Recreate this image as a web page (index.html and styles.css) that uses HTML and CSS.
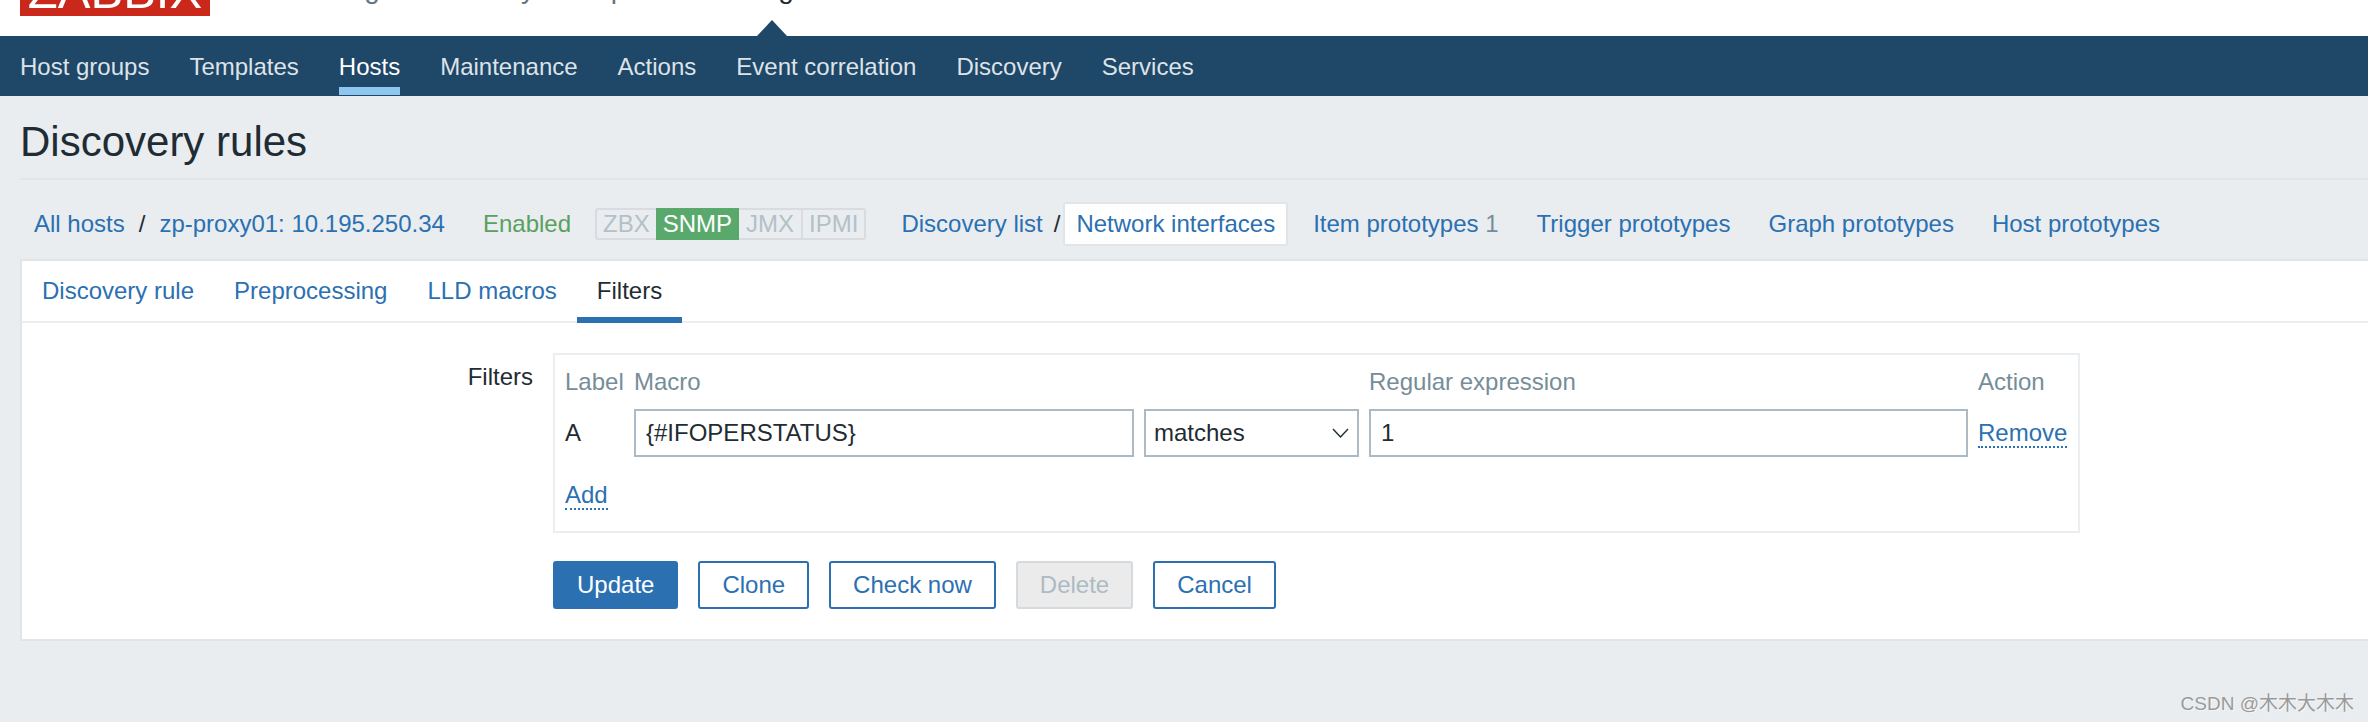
FILE: index.html
```html
<!DOCTYPE html>
<html lang="zh">
<head>
<meta charset="UTF-8" />
<title>Discovery rules</title>
<link rel="stylesheet" href="styles.css">
</head>
<body>
  <header class="top-bar">
    <div class="logo"><span>ZABBIX</span></div>
    <ul class="top-menu">
      <li>Monitoring</li>
      <li>Inventory</li>
      <li>Reports</li>
      <li class="current">Configuration</li>
      <li>Administration</li>
    </ul>
    <div class="caret"></div>
  </header>

  <nav class="sub-menu">
    <a href="#">Host groups</a>
    <a href="#">Templates</a>
    <a href="#" class="selected">Hosts</a>
    <a href="#">Maintenance</a>
    <a href="#">Actions</a>
    <a href="#">Event correlation</a>
    <a href="#">Discovery</a>
    <a href="#">Services</a>
  </nav>

  <div class="title-bar">
    <h1>Discovery rules</h1>
  </div>

  <div class="crumbs">
    <a href="#">All hosts</a>
    <span class="sep">/</span>
    <a href="#">zp-proxy01: 10.195.250.34</a>
    <span class="status-enabled">Enabled</span>
    <div class="avail">
      <span>ZBX</span>
      <span class="on">SNMP</span>
      <span>JMX</span>
      <span>IPMI</span>
    </div>
    <a href="#" class="list-link">Discovery list</a>
    <span class="sep sep-tight">/</span>
    <a href="#" class="crumb-tab active">Network interfaces</a>
    <a href="#" class="crumb-tab">Item prototypes <sup>1</sup></a>
    <a href="#" class="crumb-tab">Trigger prototypes</a>
    <a href="#" class="crumb-tab">Graph prototypes</a>
    <a href="#" class="crumb-tab">Host prototypes</a>
  </div>

  <main class="card">
    <div class="tabs">
      <a href="#">Discovery rule</a>
      <a href="#">Preprocessing</a>
      <a href="#">LLD macros</a>
      <a href="#" class="selected">Filters</a>
    </div>

    <div class="form">
      <div class="form-label">Filters</div>
      <div class="form-body">
        <div class="filter-box">
          <div class="filter-grid">
            <div class="head">Label</div>
            <div class="head">Macro</div>
            <div class="head head-gap"></div>
            <div class="head">Regular expression</div>
            <div class="head">Action</div>

            <div>A</div>
            <input type="text" value="{#IFOPERSTATUS}">
            <div class="select">
              <span>matches</span>
              <svg width="17" height="10" viewBox="0 0 17 10"><path d="M1 1l7.5 8L16 1" fill="none" stroke="#1f2c33" stroke-width="1.4"/></svg>
            </div>
            <input type="text" value="1">
            <div><a href="#" class="dotted">Remove</a></div>
          </div>
          <a href="#" class="dotted add-link">Add</a>
        </div>

        <div class="buttons">
          <button class="primary">Update</button>
          <button>Clone</button>
          <button>Check now</button>
          <button class="disabled">Delete</button>
          <button>Cancel</button>
        </div>
      </div>
    </div>
  </main>

  <div class="watermark">CSDN @木木大木木</div>
</body>
</html>
```

FILE: styles.css
```css
* {
  box-sizing: border-box;
}
html, body {
  margin: 0;
  height: 722px;
  overflow: hidden;
}
body {
  position: relative;
  background-color: #e9edf0;
  color: #1f2c33;
  font-family: "Liberation Sans", Arial, sans-serif;
  font-size: 24px;
  line-height: 28px;
}
a {
  color: #2b70b1;
  text-decoration: none;
}

/* top bar, cut off by the top of the picture */
.top-bar {
  position: relative;
  display: flex;
  align-items: flex-end;
  height: 36px;
  background-color: #fff;
  overflow: hidden;
}
.logo {
  display: flex;
  align-items: flex-end;
  justify-content: center;
  width: 190px;
  height: 16px;
  margin: 0 0 20px 20px;
  padding-bottom: 7px;
  background-color: #c9281b;
  color: #fff;
  font-size: 49px;
  line-height: 36px;
}
.logo span {
  display: block;
  height: 36px;
  flex-shrink: 0;
}
.top-menu {
  display: flex;
  gap: 40px;
  margin: 0 0 31px 39px;
  padding: 0;
  list-style: none;
  color: #66767f;
  font-size: 28px;
  line-height: 32px;
}
.top-menu .current {
  color: #1f2c33;
}
.caret {
  position: absolute;
  left: 757px;
  top: 20px;
  width: 30px;
  height: 16px;
  background-color: #1f4767;
  clip-path: polygon(50% 0, 100% 100%, 0 100%);
}

.sub-menu {
  display: flex;
  gap: 40px;
  height: 60px;
  padding: 0 20px;
  background-color: #1f4767;
}
.sub-menu a {
  height: 59px;
  padding: 17px 0 6px;
  border-bottom: 8px solid transparent;
  color: #dde3e8;
}
.sub-menu a.selected {
  color: #fff;
  border-bottom-color: #8fc6ef;
}

.title-bar {
  height: 84px;
  margin-left: 20px;
  padding-top: 22px;
  border-bottom: 2px solid #e2e5e8;
}
h1 {
  margin: 0;
  font-size: 42px;
  font-weight: normal;
  line-height: 48px;
}

.crumbs {
  display: flex;
  align-items: center;
  height: 79px;
  padding: 9px 0 0 34px;
}
.sep {
  margin: 0 14px;
}
.sep-tight {
  margin: 0 0 0 11px;
}
.status-enabled {
  margin-left: 38px;
  color: #5aa05e;
}
.avail {
  display: flex;
  height: 32px;
  margin-left: 24px;
  border: 2px solid #d8dce0;
  border-radius: 3px;
  color: #b4c0c8;
  line-height: 28px;
}
.avail span {
  padding: 0 7px;
  border-left: 2px solid #d8dce0;
}
.avail span:first-child {
  border-left: none;
  padding: 0 6px;
}
.avail span:last-child {
  padding: 0 6px;
}
.avail .on {
  margin: -2px 0;
  padding: 2px 7px;
  border-left: none;
  background-color: #5aa96c;
  color: #fff;
}
.avail .on + span {
  border-left: none;
}
.list-link {
  margin-left: 35px;
}
.crumb-tab {
  height: 44px;
  margin-left: 13px;
  padding: 8px 13px 0;
  white-space: nowrap;
}
.crumb-tab.active {
  margin-left: 3px;
  border: 2px solid #e2e5e8;
  border-radius: 3px;
  background-color: #fff;
  padding: 6px 11px 0;
}
.crumb-tab + .crumb-tab {
  margin-left: 12px;
}
.crumb-tab sup {
  color: #768d99;
  font-size: 24px;
  line-height: 0;
  vertical-align: baseline;
}

.card {
  height: 382px;
  margin-left: 20px;
  border: 2px solid #e2e5e8;
  border-right: none;
  background-color: #fff;
}
.tabs {
  display: flex;
  height: 62px;
  border-bottom: 2px solid #ebeef0;
}
.tabs a {
  height: 62px;
  padding: 16px 20px 0;
}
.tabs a.selected {
  color: #1f2c33;
  border-bottom: 6px solid #2b70b1;
}

.form {
  display: flex;
  padding-top: 30px;
}
.form-label {
  width: 511px;
  padding-top: 10px;
  text-align: right;
}
.form-body {
  margin-left: 20px;
}
.filter-box {
  width: 1527px;
  height: 180px;
  padding: 12px 10px 0;
  border: 2px solid #ebeef0;
}
.filter-grid {
  display: grid;
  grid-template-columns: 59px 500px 215px 599px 89px;
  grid-template-rows: 30px 48px;
  column-gap: 10px;
  row-gap: 12px;
  align-items: center;
}
.head {
  color: #768d99;
}
.head-gap {
  visibility: hidden;
}
input[type="text"], .select {
  width: 100%;
  height: 48px;
  padding: 0 10px;
  border: 2px solid #acbac5;
  background-color: #fff;
  color: #1f2c33;
  font-family: inherit;
  font-size: 24px;
  outline: none;
}
.select {
  display: flex;
  align-items: center;
  justify-content: space-between;
  padding: 0 8px;
}
.dotted {
  display: inline-block;
  border-bottom: 2px dotted #2b70b1;
  line-height: 26px;
}
.add-link {
  margin-top: 25px;
}

.buttons {
  display: flex;
  gap: 20px;
  margin-top: 28px;
}
button {
  height: 48px;
  padding: 0 22px;
  border: 2px solid #2b70b1;
  border-radius: 3px;
  background-color: #fff;
  color: #2b70b1;
  font-family: inherit;
  font-size: 24px;
  cursor: pointer;
}
button.primary {
  background-color: #2b70b1;
  color: #fff;
}
button.disabled {
  border-color: #d5dade;
  background-color: #ebebeb;
  color: #acbbc4;
}

.watermark {
  position: absolute;
  right: 14px;
  bottom: 7px;
  color: #9a9a9a;
  font-family: "Liberation Sans", "Noto Sans CJK SC", sans-serif;
  font-size: 19px;
  line-height: 22px;
  text-shadow: 1px 1px 0 #f6f6f6;
}
```
